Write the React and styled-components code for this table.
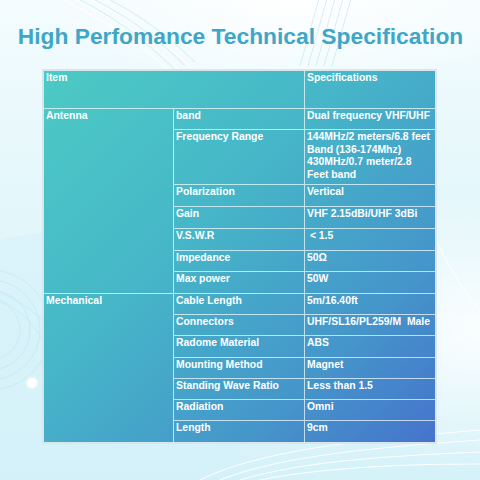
import React from 'react'
import styled, { createGlobalStyle } from 'styled-components'

const GlobalStyle = createGlobalStyle`
  html, body {
    margin: 0;
    padding: 0;
  }
  body {
    font-family: "Liberation Sans", Arial, sans-serif;
  }
`

const Page = styled.div`
  position: relative;
  width: 480px;
  height: 480px;
  overflow: hidden;
  background:
    radial-gradient(ellipse 260px 200px at 470px 330px, rgba(255, 255, 255, 0.85), rgba(255, 255, 255, 0) 70%),
    radial-gradient(ellipse 320px 120px at 300px 0px, rgba(255, 255, 255, 0.95), rgba(255, 255, 255, 0) 80%),
    linear-gradient(180deg, #f4fcfe 0%, #e4f7fb 40%, #d6f2f9 100%);
  display: flex;
  flex-direction: column;
  align-items: center;
  padding-top: 22px;
  box-sizing: border-box;
`

const Decor = styled.svg`
  position: absolute;
  inset: 0;
  pointer-events: none;
`

const Title = styled.h1`
  position: relative;
  margin: 0 0 0 1px;
  font-size: 22.8px;
  line-height: 28px;
  font-weight: 700;
  color: #3ea7c7;
  white-space: nowrap;
`

const Table = styled.div`
  position: relative;
  margin-top: 19px;
  margin-left: -1px;
  display: grid;
  grid-template-columns: 130px 131px 130px;
  grid-template-rows: 38px 21px 55px 22px 22px 22px 21px 22px 21px 21px 22px 21px 21px 21px 21px;
  border: 2px solid #d9e6ec;
  background: linear-gradient(135deg, #4ccac4 0%, #46b6c8 40%, #4596ca 75%, #4673cc 100%);
`

const Cell = styled.div`
  grid-column: ${p => p.$col || 'auto'};
  grid-row: ${p => p.$row || 'auto'};
  border-right: ${p => (p.$last ? 'none' : '1px solid rgba(236, 248, 250, 0.75)')};
  border-bottom: ${p => (p.$bottom ? 'none' : '1px solid rgba(236, 248, 250, 0.75)')};
  padding: 1px 3px 0 2px;
  color: #fff;
  font-size: 10.4px;
  line-height: 12.5px;
  font-weight: 700;
  white-space: pre-wrap;
  overflow: hidden;
`

const Dot = styled.div`
  position: absolute;
  left: 27px;
  top: 378px;
  width: 10px;
  height: 10px;
  border-radius: 50%;
  background: #fff;
  box-shadow: 0 0 4px rgba(255, 255, 255, 0.9);
`

const antenna = [
  ['band', 'Dual frequency VHF/UHF'],
  ['Frequency Range', '144MHz/2 meters/6.8 feet\nBand (136-174Mhz)\n430MHz/0.7 meter/2.8\nFeet band'],
  ['Polarization', 'Vertical'],
  ['Gain', 'VHF 2.15dBi/UHF 3dBi'],
  ['V.S.W.R', ' < 1.5'],
  ['Impedance', '50Ω'],
  ['Max power', '50W'],
]

const mechanical = [
  ['Cable Length', '5m/16.40ft'],
  ['Connectors', 'UHF/SL16/PL259/M  Male'],
  ['Radome Material', 'ABS'],
  ['Mounting Method', 'Magnet'],
  ['Standing Wave Ratio', 'Less than 1.5'],
  ['Radiation', 'Omni'],
  ['Length', '9cm'],
]

const Group = ({ name, rows, start, isLast }) => (
  <>
    <Cell $col="1" $row={`${start} / span ${rows.length}`} $bottom={isLast}>
      {name}
    </Cell>
    {rows.map(([k, v], i) => {
      const bottom = isLast && i === rows.length - 1
      return (
        <React.Fragment key={k}>
          <Cell $col="2" $row={`${start + i}`} $bottom={bottom}>{k}</Cell>
          <Cell $col="3" $row={`${start + i}`} $last $bottom={bottom}>{v}</Cell>
        </React.Fragment>
      )
    })}
  </>
)

const Background = () => (
  <Decor width="480" height="480" viewBox="0 0 480 480">
    <path d="M0 240 C 80 220, 160 240, 240 290 L 240 480 L 0 480 Z" fill="#d2f1f9" opacity="0.4" />
    <g fill="none" stroke="#ffffff" strokeWidth="1.2" opacity="0.9">
      <path d="M40 -10 C 110 20, 170 60, 200 110" />
      <path d="M55 -10 C 120 20, 175 55, 205 100" />
      <path d="M70 -10 C 130 18, 182 50, 212 92" />
    </g>
    <g fill="none" stroke="#c4e9f3" strokeWidth="0.9" opacity="0.8">
      <path d="M80 0 C 120 20, 150 45, 175 70" />
      <path d="M95 0 C 130 18, 160 40, 185 66" />
      <path d="M110 0 C 140 15, 168 36, 195 62" />
      <path d="M320 -5 L 300 66" />
      <path d="M328 -5 L 308 66" />
      <path d="M336 -5 L 316 66" />
      <path d="M344 -5 L 324 66" />
      <path d="M352 -5 L 332 66" />
      <circle cx="-10" cy="330" r="30" />
      <circle cx="-10" cy="330" r="40" />
      <circle cx="-10" cy="330" r="50" />
      <circle cx="-10" cy="330" r="60" />
      <path d="M0 300 C 40 320, 60 360, 55 400" />
      <path d="M-5 290 C 30 305, 60 330, 70 360" />
    </g>
    <g fill="none" stroke="#ffffff" strokeWidth="1.1" opacity="0.95">
      <path d="M200 480 C 260 450, 360 440, 480 430" />
      <path d="M220 480 C 280 456, 370 448, 480 440" />
      <path d="M240 480 C 300 462, 380 456, 480 452" />
      <path d="M260 480 C 320 468, 390 464, 480 464" />
      <path d="M420 200 C 440 260, 470 300, 480 310" />
    </g>
  </Decor>
)

export default function App() {
  return (
    <Page>
      <GlobalStyle />
      <Background />
      <Dot />
      <Title>High Perfomance Technical Specification</Title>
      <Table>
        <Cell $col="1 / span 2" $row="1">Item</Cell>
        <Cell $col="3" $row="1" $last>Specifications</Cell>
        <Group name="Antenna" rows={antenna} start={2} />
        <Group name="Mechanical" rows={mechanical} start={9} isLast />
      </Table>
    </Page>
  )
}
